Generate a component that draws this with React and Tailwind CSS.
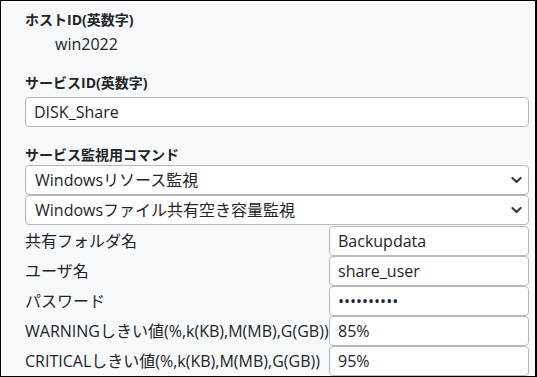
const font = { fontFamily: '"Open Sans", "Noto Sans CJK JP", sans-serif' };

function Chevron() {
  return (
    <svg width="11" height="11" viewBox="0 0 16 16" className="absolute right-[6px] top-1/2 -translate-y-1/2">
      <path d="M2 5l6 6 6-6" fill="none" stroke="#343a40" strokeWidth="3" strokeLinecap="round" strokeLinejoin="round" />
    </svg>
  );
}

function Select({ value }) {
  return (
    <div className="relative h-[30px] w-[504px] rounded-[4px] border border-[#b5b9bd] bg-white pl-[9px] flex items-center text-[16px] text-[#212529]">
      {value}
      <Chevron />
    </div>
  );
}

function Field({ value, className = "" }) {
  return (
    <div className={"h-[30px] rounded-[4px] border border-[#b5b9bd] bg-white pl-[8px] flex items-center text-[16px] text-[#212529] " + className}>
      {value}
    </div>
  );
}

const rows = [
  ["共有フォルダ名", "Backupdata"],
  ["ユーザ名", "share_user"],
  ["パスワード", "••••••••••"],
  ["WARNINGしきい値(%,k(KB),M(MB),G(GB))", "85%"],
  ["CRITICALしきい値(%,k(KB),M(MB),G(GB))", "95%"],
];

export default function App() {
  return (
    <div style={font} className="w-[537px] h-[377px] overflow-hidden border-t border-l border-b border-r-2 border-black bg-[#f8f9fa] pl-[24px] text-[#212529]">
      <div className="mt-[9px] text-[14px] font-bold leading-[20px]">ホストID(英数字)</div>
      <div className="mt-[3px] pl-[30px] text-[16px] leading-[22px]">win2022</div>
      <div className="mt-[18px] text-[14px] font-bold leading-[20px]">サービスID(英数字)</div>
      <Field value="DISK_Share" className="mt-[4px] w-[504px]" />
      <div className="mt-[18px] text-[14px] font-bold leading-[20px]">サービス監視用コマンド</div>
      <div className="flex flex-col">
        <Select value="Windowsリソース監視" />
        <Select value="Windowsファイル共有空き容量監視" />
      </div>
      <div className="mt-[1px] flex flex-col">
        {rows.map(([label, value]) => (
          <div key={label} className="flex items-center h-[30px]">
            <div className="w-[304px] text-[16px] leading-[22px] whitespace-nowrap">{label}</div>
            <Field value={value} className="w-[200px]" />
          </div>
        ))}
      </div>
    </div>
  );
}
